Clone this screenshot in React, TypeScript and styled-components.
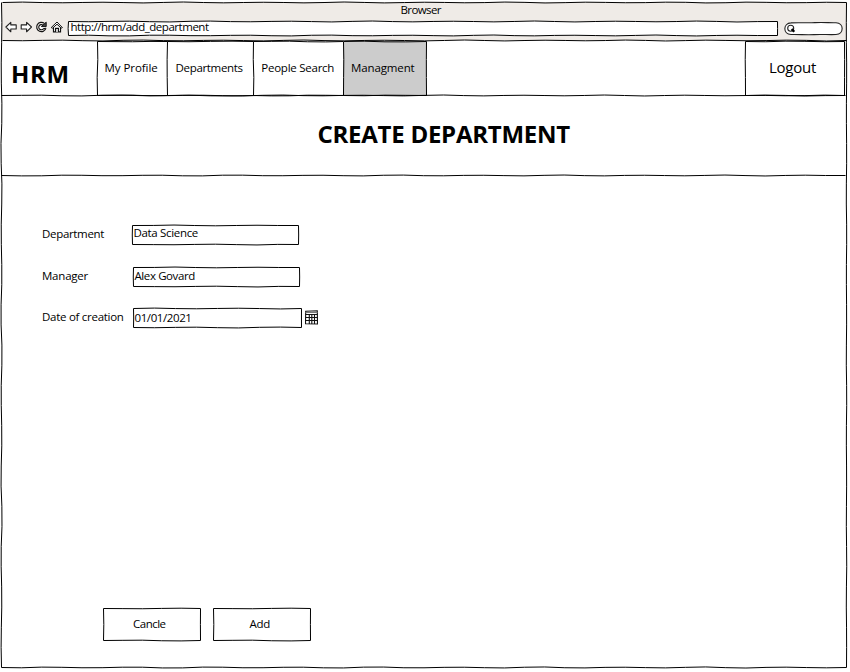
import React from "react";
import styled, { createGlobalStyle } from "styled-components";

const GlobalStyle = createGlobalStyle`
  * { box-sizing: border-box; }
  body { margin: 0; background: #fff; color: #000; }
`;

/* ---------- hand-drawn outlines ---------- */

function wobble(x1: number, y1: number, x2: number, y2: number, seed: number, amp: number) {
  const len = Math.hypot(x2 - x1, y2 - y1);
  const steps = Math.max(2, Math.round(len / 20));
  const nx = -(y2 - y1) / len;
  const ny = (x2 - x1) / len;
  let d = `M${x1} ${y1}`;
  for (let i = 1; i <= steps; i++) {
    const t = i / steps;
    const off = i === steps ? 0 : amp * Math.sin(i * 1.55 + seed * 1.7) * (0.75 + 0.25 * Math.sin(i * 0.7 + seed));
    d += ` L${(x1 + (x2 - x1) * t + nx * off).toFixed(2)} ${(y1 + (y2 - y1) * t + ny * off).toFixed(2)}`;
  }
  return d;
}

const Outline = styled.svg`
  position: absolute;
  inset: 0;
  overflow: visible;
  pointer-events: none;
`;

type SketchProps = { w: number; h: number; seed?: number; sides?: string; amp?: number };

function Sketch({ w, h, seed = 1, sides = "trbl", amp = 0.5 }: SketchProps) {
  const r = w + 0.5;
  const b = h + 0.5;
  const lines: Record<string, string> = {
    t: wobble(0.5, 0.5, r, 0.5, seed, amp),
    r: wobble(r, 0.5, r, b, seed + 1, amp * 0.4),
    b: wobble(0.5, b, r, b, seed + 2, amp),
    l: wobble(0.5, 0.5, 0.5, b, seed + 3, amp),
  };
  return (
    <Outline width={w} height={h} fill="none" stroke="#000" strokeWidth="1">
      <path d={sides.split("").map((s) => lines[s]).join(" ")} />
    </Outline>
  );
}

/* ---------- text ---------- */

const Text = styled.span<{ $track?: number; $size?: number; $line?: number }>`
  position: relative;
  font-family: "Open Sans", "Noto Sans", sans-serif;
  font-size: ${(p) => p.$size ?? 11.5}px;
  line-height: ${(p) => p.$line ?? 16}px;
  letter-spacing: ${(p) => p.$track ?? 0}px;
  white-space: nowrap;
`;

const Heading = styled(Text)`
  font-weight: 700;
  margin: 0;
`;

/* ---------- browser window ---------- */

const Page = styled.div`
  width: 850px;
  height: 672px;
  padding: 2px 0 0 1px;
  overflow: hidden;
`;

const Window = styled.div`
  position: relative;
  width: 845px;
  height: 665px;
  display: flex;
  flex-direction: column;
`;

const Chrome = styled.div`
  position: relative;
  height: 38px;
  margin-left: 1px;
  background: #efebe7;
`;

const ChromeTitle = styled.div`
  height: 16px;
  padding-left: 398.5px;
  display: flex;
`;

const Toolbar = styled.div`
  display: flex;
  align-items: flex-start;
  padding: 3px 0 0 3px;
`;

const ToolIcons = styled.div`
  display: flex;
  gap: 3px;
  width: 63px;
  svg { display: block; flex: none; }
`;

const AddressBar = styled.div`
  position: relative;
  width: 710px;
  height: 15px;
  padding-left: 2.5px;
  margin-right: 6px;
  background: #fff;
  display: flex;
  align-items: flex-start;
  ${Text} { margin-top: -2px; }
`;

const SearchBox = styled.svg`
  display: block;
  margin-top: 1px;
`;

/* ---------- application ---------- */

const Header = styled.header`
  display: flex;
  height: 55px;
  position: relative;
`;

const Brand = styled.div`
  width: 96px;
  padding: 18px 0 0 10px;
  display: flex;
`;

const NavItem = styled.div<{ $w: number; $active?: boolean; $pad?: number }>`
  position: relative;
  width: ${(p) => p.$w}px;
  height: 54px;
  margin-top: 1px;
  padding: ${(p) => `19px 0 0 ${p.$pad ?? 7}px`};
  display: flex;
  align-items: flex-start;
  background: ${(p) => (p.$active ? "#ccc" : "transparent")};
`;

const Logout = styled(NavItem)`
  margin-left: auto;
  margin-right: 1px;
  padding: 16px 0 0 24px;
`;

const TitleBand = styled.div`
  position: relative;
  height: 80px;
  padding: 23px 0 0 316.5px;
  display: flex;
`;

const Form = styled.form`
  flex: 1;
  padding: 49px 0 0 41px;
  display: flex;
  flex-direction: column;
`;

const Row = styled.div<{ $h: number }>`
  display: flex;
  align-items: flex-start;
  height: ${(p) => p.$h}px;
`;

const Label = styled.label<{ $w: number; $top: number }>`
  width: ${(p) => p.$w}px;
  padding-top: ${(p) => p.$top}px;
  display: flex;
`;

const Field = styled.div<{ $w: number; $top: number; $drop?: number }>`
  position: relative;
  width: ${(p) => p.$w}px;
  height: 19px;
  margin-top: ${(p) => p.$drop ?? 0}px;
  padding: ${(p) => p.$top}px 0 0 1.5px;
  display: flex;
  align-items: flex-start;
`;

const CalendarIcon = styled.svg`
  display: block;
  margin: 2px 0 0 3px;
`;

const Actions = styled.div`
  display: flex;
  gap: 13px;
  margin: auto 0 27px 61px;
`;

const Button = styled.div<{ $pad: number }>`
  position: relative;
  width: 97px;
  height: 32px;
  padding: 8px 0 0 ${(p) => p.$pad}px;
  display: flex;
`;

const NAV = [
  { label: "My Profile", w: 70, track: -0.06, pad: 7.5 },
  { label: "Departments", w: 86, track: -0.32, pad: 8.5 },
  { label: "People Search", w: 90, track: -0.25, pad: 8.3 },
  { label: "Managment", w: 83, track: -0.12, pad: 8, active: true },
];

function ArrowIcon({ flip }: { flip?: boolean }) {
  return (
    <svg width="12" height="12" viewBox="0 0 12 12" fill="#fff" stroke="#222" strokeWidth="1.1" strokeLinejoin="round">
      <path
        transform={flip ? "translate(12.4 0) scale(-1 1)" : undefined}
        d="M.9 6 5.8 1.3V3.9H11.2V8H5.8V10.8Z"
      />
    </svg>
  );
}

export default function App() {
  return (
    <Page>
      <GlobalStyle />
      <Window>
        <Chrome>
          <ChromeTitle>
            <Text $track={-0.6}>Browser</Text>
          </ChromeTitle>
          <Toolbar>
            <ToolIcons>
              <ArrowIcon />
              <ArrowIcon flip />
              <svg width="12" height="12" viewBox="0 0 12 12" fill="none" stroke="#111">
                <path d="M9.4 2.4A4.7 4.7 0 1 0 10.9 7.2" strokeWidth="1.2" />
                <path d="M8 4.2A2.6 2.6 0 1 0 8.4 7.8L10.8 7.3" fill="#fff" strokeWidth="1.1" />
                <path d="M11.2 1.2V5.6H6.4Z" fill="#444" strokeWidth="1" />
              </svg>
              <svg width="13" height="12" viewBox="0 0 13 12" fill="#fff" stroke="#111" strokeWidth="1.2">
                <path d="M3.5 5.5V10.9H10.5V5.5" />
                <path d="M1.2 6.6 7 1 12.4 6.6 11.2 7.1 7 3.2 2.6 7.1Z" strokeWidth="1" />
                <path d="M5.6 10.9V7.4H8.4V10.9" />
              </svg>
            </ToolIcons>
            <AddressBar>
              <Sketch w={709} h={14} seed={4} />
              <Text $track={-0.47}>http://hrm/add_department</Text>
            </AddressBar>
            <SearchBox width="60" height="14" viewBox="0 0 60 14" fill="#fff" stroke="#222">
              <path
                d="M7 .9 C16 .3 22 1.2 31 .6 S46 1 52 .7 C60.2 .9 60.2 12.2 52 12.5 C45 12.9 38 12.1 30 12.6 S15 12.2 7 12.5 C-1.2 12.2-1.2 1.2 7 .9Z"
                strokeWidth="1.1"
              />
              <circle cx="6.7" cy="6.2" r="3" strokeWidth="1.1" />
              <path d="M7.6 7.1 10.3 9.8" stroke="#000" strokeWidth="2.3" />
            </SearchBox>
          </Toolbar>
          <Sketch w={844} h={38} seed={2} sides="tb" />
        </Chrome>

        <Header>
          <Brand>
            <Heading as="h2" $size={24} $line={32} $track={0.6}>HRM</Heading>
          </Brand>
          {NAV.map((n, i) => (
            <NavItem key={n.label} $w={n.w} $pad={n.pad} $active={n.active}>
              <Sketch w={n.w} h={54} seed={i + 3} sides={i === 3 ? "trbl" : "tbl"} />
              <Text $track={n.track}>{n.label}</Text>
            </NavItem>
          ))}
          <Logout $w={100}>
            <Sketch w={99} h={54} seed={8} />
            <Text $size={15} $line={20} $track={-0.25}>Logout</Text>
          </Logout>
        </Header>

        <TitleBand>
          <Sketch w={844} h={80} seed={5} sides="tb" />
          <Heading as="h1" $size={24} $line={32} $track={-0.26}>CREATE DEPARTMENT</Heading>
        </TitleBand>

        <Form>
          <Row $h={42}>
            <Label $w={90} $top={2}><Text $track={-0.32}>Department</Text></Label>
            <Field $w={167} $top={0} $drop={1}>
              <Sketch w={166} h={19} seed={1} />
              <Text $track={-0.33}>Data Science</Text>
            </Field>
          </Row>
          <Row $h={42}>
            <Label $w={91} $top={2}><Text $track={-0.22}>Manager</Text></Label>
            <Field $w={167} $top={1} $drop={1}>
              <Sketch w={166} h={19} seed={1} />
              <Text $track={-0.4}>Alex Govard</Text>
            </Field>
          </Row>
          <Row $h={30}>
            <Label $w={91} $top={1}><Text $track={-0.28}>Date of creation</Text></Label>
            <Field $w={169} $top={2}>
              <Sketch w={168} h={19} seed={2} />
              <Text $track={-0.4}>01/01/2021</Text>
            </Field>
            <CalendarIcon width="13" height="15" viewBox="0 0 13 15" fill="none" stroke="#111" strokeWidth="1.1">
              <path d="M.7 1.2 12.3.8 12.5 14 .5 13.7Z" />
              <path d="M.5 2.5H12.5" stroke="#777" />
              <path d="M.5 4.5H12.5M.5 7.5H12.5M.5 10.5H12.5M4.3 4.5V14M6.8 4.5V14M9.5 4.5V14" />
            </CalendarIcon>
          </Row>
          <Actions>
            <Button $pad={30}>
              <Sketch w={97} h={32} seed={3} />
              <Text $track={-0.5}>Cancle</Text>
            </Button>
            <Button $pad={36.5}>
              <Sketch w={97} h={32} seed={3} />
              <Text $track={-0.25}>Add</Text>
            </Button>
          </Actions>
        </Form>
        <Sketch w={845} h={665} seed={6} sides="rbl" amp={0.6} />
      </Window>
    </Page>
  );
}
